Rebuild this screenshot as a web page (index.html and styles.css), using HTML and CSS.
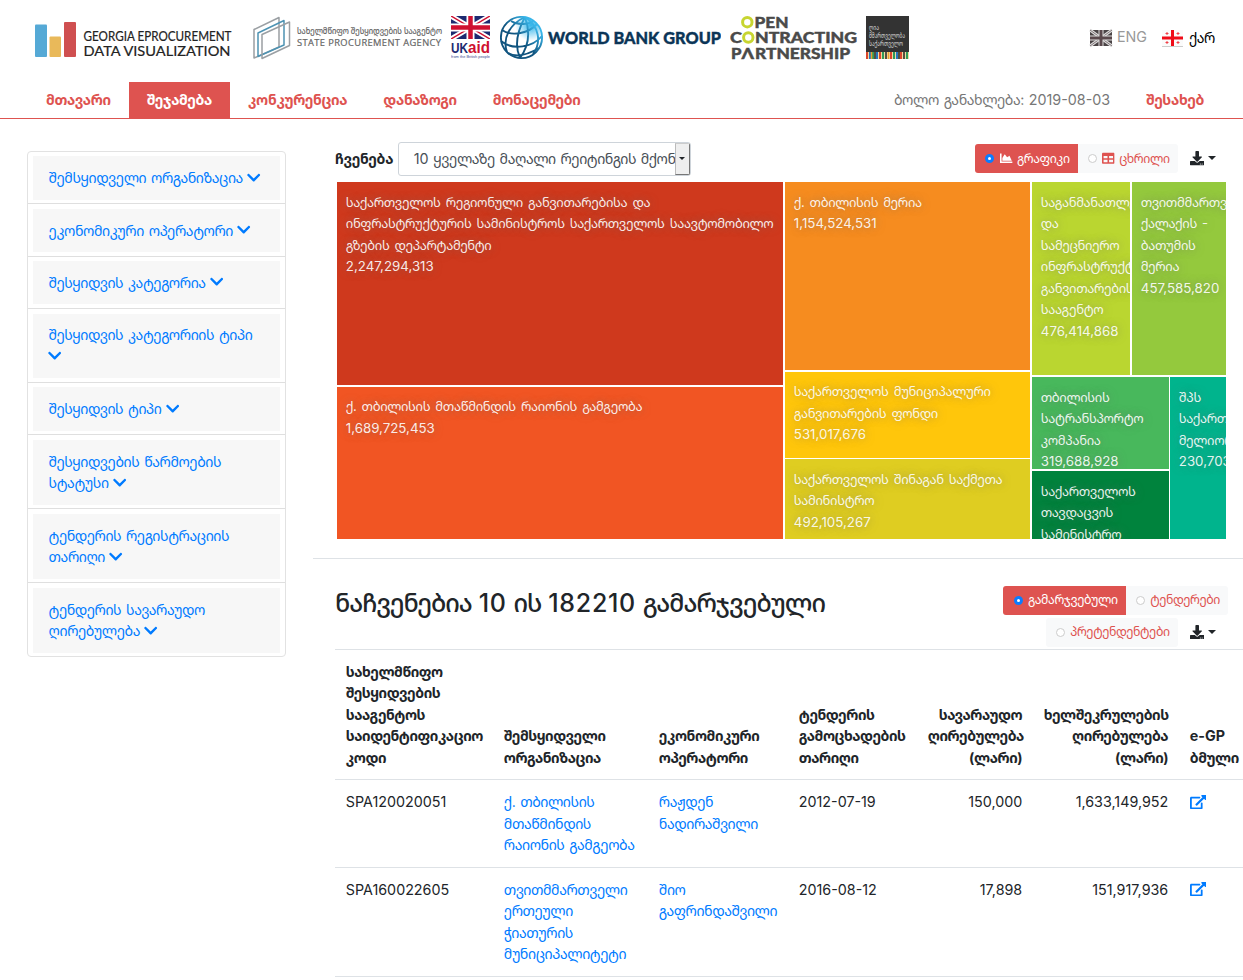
FILE: index.html
```html
<!DOCTYPE html>
<html lang="ka">
<head>
<meta charset="utf-8">
<title>Georgia eProcurement Data Visualization</title>
<link rel="stylesheet" href="styles.css">
</head>
<body>
<svg class="defs" width="0" height="0">
  <symbol id="chev" viewBox="0 0 448 512"><path d="M207.029 381.476L12.686 187.132c-9.373-9.373-9.373-24.569 0-33.941l22.667-22.667c9.357-9.357 24.522-9.375 33.901-.04L224 284.505l154.745-154.021c9.379-9.335 24.544-9.317 33.901.04l22.667 22.667c9.373 9.373 9.373 24.569 0 33.941L240.971 381.476c-9.373 9.372-24.569 9.372-33.942 0z"/></symbol>
  <symbol id="area" viewBox="0 0 512 512"><path d="M500 384c6.6 0 12 5.4 12 12v40c0 6.6-5.4 12-12 12H12c-6.6 0-12-5.4-12-12V76c0-6.6 5.4-12 12-12h40c6.6 0 12 5.4 12 12v308h436zM372.7 159.5L288 216l-85.3-113.7c-5.1-6.8-15.5-6.3-19.9 1L96 248v104h384l-89.9-187.8c-3.2-6.5-11.4-8.7-17.4-4.7z"/></symbol>
  <symbol id="grid" viewBox="0 0 512 512"><path d="M464 32H48C21.49 32 0 53.49 0 80v352c0 26.51 21.49 48 48 48h416c26.51 0 48-21.49 48-48V80c0-26.51-21.49-48-48-48zM224 416H64v-96h160v96zm0-160H64v-96h160v96zm224 160H288v-96h160v96zm0-160H288v-96h160v96z"/></symbol>
  <symbol id="down" viewBox="0 0 512 512"><path d="M216 0h80c13.3 0 24 10.7 24 24v168h87.7c17.8 0 26.7 21.5 14.1 34.1L269.7 378.3c-7.5 7.5-19.8 7.5-27.3 0L90.1 226.1c-12.6-12.6-3.7-34.1 14.1-34.1H192V24c0-13.3 10.7-24 24-24zm296 376v112c0 13.3-10.7 24-24 24H24c-13.3 0-24-10.7-24-24V376c0-13.3 10.7-24 24-24h146.7l49 49c20.1 20.1 52.5 20.1 72.6 0l49-49H488c13.3 0 24 10.7 24 24zm-124 88c0-11-9-20-20-20s-20 9-20 20 9 20 20 20 20-9 20-20zm64 0c0-11-9-20-20-20s-20 9-20 20 9 20 20 20 20-9 20-20z"/></symbol>
  <symbol id="ext" viewBox="0 0 576 512"><path d="M576 24v127.984c0 21.461-25.96 31.98-40.971 16.971l-35.707-35.709-243.523 243.523c-9.373 9.373-24.568 9.373-33.941 0l-22.627-22.627c-9.373-9.373-9.373-24.569 0-33.941L442.756 76.676l-35.703-35.705C391.982 25.9 402.656 0 424.024 0H552c13.255 0 24 10.745 24 24zM407.029 270.794l-16 16A23.999 23.999 0 0 0 384 303.765V448H64V128h264a24.003 24.003 0 0 0 16.97-7.029l16-16C376.089 89.851 365.381 64 344 64H48C21.49 64 0 85.49 0 112v352c0 26.51 21.49 48 48 48h352c26.51 0 48-21.49 48-48V287.764c0-21.382-25.852-32.09-40.971-16.97z"/></symbol>
</svg>

<header class="top">
  <svg class="logo logo-ge" width="198" height="43" viewBox="0 0 198 43">
    <rect x="0" y="8.500" width="12" height="32.500" rx="1" fill="#55a9d6"/>
    <rect x="14.500" y="20.500" width="11.500" height="20.500" rx="1" fill="#e9b95a"/>
    <rect x="29" y="6" width="12" height="35" rx="1" fill="#cf4f50"/>
    <text x="48.500" y="24.600" font-size="13" textLength="148" lengthAdjust="spacingAndGlyphs" class="lato">GEORGIA EPROCUREMENT</text>
    <text x="48.500" y="40.400" font-size="14.300" textLength="147" lengthAdjust="spacingAndGlyphs" class="lato">DATA VISUALIZATION</text>
  </svg>
  <svg class="logo logo-spa" width="190" height="45" viewBox="0 0 190 45">
    <g fill="none" stroke-width="1.500" stroke-linejoin="round">
      <path d="M1 13.500L26 1.500V31L1 42z" stroke="#9a9fa3"/>
      <path d="M5 17L31 4.500V29L5 40.500z" stroke="#4d93b3"/>
      <path d="M9 18.500L36.500 6V29.500L9 42.500z" stroke="#9a9fa3"/>
    </g>
    <text x="44" y="18.300" font-size="8.500" textLength="145" lengthAdjust="spacingAndGlyphs" class="spa">სახელმწიფო შესყიდვების სააგენტო</text>
    <text x="44" y="29.600" font-size="9.300" textLength="144" lengthAdjust="spacing" class="spa">STATE PROCUREMENT AGENCY</text>
  </svg>
  <svg class="logo logo-uk" width="39" height="44" viewBox="0 0 39 44">
    <svg width="39" height="23" viewBox="0 0 39 23">
      <rect width="39" height="23" fill="#1d2a70"/>
      <path d="M0 0L39 23M39 0L0 23" stroke="#fff" stroke-width="5"/>
      <path d="M0 0L39 23M39 0L0 23" stroke="#cf1030" stroke-width="1.500"/>
      <path d="M19.500 0V23M0 11.500H39" stroke="#fff" stroke-width="8"/>
      <path d="M19.500 0V23M0 11.500H39" stroke="#cf1030" stroke-width="4.500"/>
    </svg>
    <text x="0" y="36.800" font-size="15" class="ukaid" fill="#1d2a70" textLength="17" lengthAdjust="spacingAndGlyphs">UK</text>
    <text x="17" y="36.800" font-size="16" class="ukaid" fill="#cf1030" textLength="22" lengthAdjust="spacingAndGlyphs">aid</text>
    <text x="0" y="42" font-size="4" class="tag" fill="#3d4a90" textLength="39" lengthAdjust="spacingAndGlyphs">from the British people</text>
  </svg>
  <svg class="logo logo-wb" width="221" height="44" viewBox="0 0 221 44">
    <defs><linearGradient id="globe" x1="0" y1="1" x2="1" y2="0"><stop offset="0.450" stop-color="#10547f"/><stop offset="0.800" stop-color="#38b5e9"/></linearGradient><radialGradient id="glow" cx="31" cy="9" r="16" gradientUnits="userSpaceOnUse"><stop offset="0" stop-color="#30b4ea"/><stop offset="1" stop-color="#fff"/></radialGradient></defs>
    <circle cx="21.500" cy="21.500" r="20.500" fill="url(#glow)"/>
    <g fill="none" stroke="url(#globe)" stroke-width="1.900">
      <circle cx="21.500" cy="21.500" r="20.600"/>
      <path d="M25 1C10 8 2 22 7 36M25 1C18 14 14 29 20 42M25 1C30 15 29 30 20 42M25 1C39 10 42 26 33 38M2 14C12 21 29 17 37 8M1 25C13 35 33 31 42 20M8 37C17 42 29 38 39 32M11 5C19 10 29 8 33 5"/>
    </g>
    <text x="48" y="28" font-size="17.800" class="wb" textLength="173" lengthAdjust="spacingAndGlyphs">WORLD BANK GROUP</text>
  </svg>
  <svg class="logo logo-ocp" width="128" height="44" viewBox="0 0 128 44">
    <g class="ocp">
      <text x="24.500" y="11.800" font-size="15.500" textLength="34" lengthAdjust="spacingAndGlyphs">PEN</text>
      <text x="0" y="27" font-size="15.500" textLength="12" lengthAdjust="spacingAndGlyphs">C</text>
      <text x="25" y="27" font-size="15.500" textLength="102" lengthAdjust="spacingAndGlyphs">NTRACTING</text>
      <text x="1" y="42.800" font-size="15.500" textLength="10.500" lengthAdjust="spacingAndGlyphs">P</text>
      <text x="11.500" y="42.800" font-size="15.500" textLength="12.500" lengthAdjust="spacingAndGlyphs">Λ</text>
      <text x="25" y="42.800" font-size="15.500" textLength="95" lengthAdjust="spacingAndGlyphs">RTNERSHIP</text>
    </g>
    <circle cx="17.300" cy="6.200" r="4.700" fill="none" stroke="#c7d530" stroke-width="3"/>
    <circle cx="18.300" cy="21.500" r="4.700" fill="none" stroke="#c7d530" stroke-width="3"/>
  </svg>
  <svg class="logo logo-og" width="43" height="43" viewBox="0 0 43 43">
    <rect width="43" height="36" fill="#333"/>
    <g font-size="6.500" class="og"><text x="3" y="13.500" textLength="10" lengthAdjust="spacingAndGlyphs">ღია</text><text x="3" y="21.500" textLength="36" lengthAdjust="spacingAndGlyphs">მმართველობა</text><text x="3" y="29.500" textLength="34" lengthAdjust="spacingAndGlyphs">საქართველო</text></g>
    <rect y="36" width="43" height="7" fill="#f0d9a0"/>
    <path stroke-width="2" stroke="#d9452c" d="M1 36v7M14 36v7M25 36v7M35 36v7"/>
    <path stroke-width="2" stroke="#2676c0" d="M4 36v7M11 36v7M31 36v7"/>
    <path stroke-width="2" stroke="#2f9b58" d="M7 36v7M17 36v7M28 36v7M41 36v7"/>
    <path stroke-width="1.500" stroke="#222" d="M9 36v7M20 36v7M33 36v7M38 36v7"/>
    <path stroke-width="1.500" stroke="#eda12d" d="M22.500 36v7M5.500 36v7"/>
  </svg>
  <div class="langs">
    <svg width="24" height="20" viewBox="0 0 24 20"><rect x="1" y="2" width="22" height="16" fill="#4a4345"/><path d="M1 2L23 18M23 2L1 18" stroke="#ddd" stroke-width="2.800"/><path d="M1 2L23 18M23 2L1 18" stroke="#6b5c60" stroke-width=".8"/><path d="M12 2V18M1 10H23" stroke="#ddd" stroke-width="5"/><path d="M12 2V18M1 10H23" stroke="#5a484c" stroke-width="3"/></svg>
    <span class="eng n">ENG</span>
    <svg width="24" height="20" viewBox="0 0 24 20"><rect x="1" y="2" width="21" height="16" fill="#fbfbfb"/><path d="M1 18.500H22" stroke="#ccc"/><path d="M11.500 2V18M1 10H22" stroke="#f00c18" stroke-width="3"/><path d="M6 4v3M4.500 5.500h3M17 4v3M15.500 5.500h3M6 13v3M4.500 14.500h3M17 13v3M15.500 14.500h3" stroke="#f04048" stroke-width="1"/></svg>
    <span class="kar">ქარ</span>
  </div>
</header>

<nav class="nav">
  <a>მთავარი</a><a class="active">შეჯამება</a><a>კონკურენცია</a><a>დანაზოგი</a><a>მონაცემები</a>
  <span class="updated">ბოლო განახლება: <span class="n">2019-08-03</span></span><a>შესახებ</a>
</nav>

<div class="page">
  <aside class="filters">
    <div class="card"><div class="head">შემსყიდველი ორგანიზაცია <svg class="chev"><use href="#chev"/></svg></div></div>
    <div class="card"><div class="head">ეკონომიკური ოპერატორი <svg class="chev"><use href="#chev"/></svg></div></div>
    <div class="card"><div class="head">შესყიდვის კატეგორია <svg class="chev"><use href="#chev"/></svg></div></div>
    <div class="card"><div class="head">შესყიდვის კატეგორიის ტიპი<br><svg class="chev"><use href="#chev"/></svg></div></div>
    <div class="card"><div class="head">შესყიდვის ტიპი <svg class="chev"><use href="#chev"/></svg></div></div>
    <div class="card"><div class="head">შესყიდვების წარმოების<br>სტატუსი <svg class="chev"><use href="#chev"/></svg></div></div>
    <div class="card"><div class="head">ტენდერის რეგისტრაციის<br>თარიღი <svg class="chev"><use href="#chev"/></svg></div></div>
    <div class="card"><div class="head">ტენდერის სავარაუდო<br>ღირებულება <svg class="chev"><use href="#chev"/></svg></div></div>
  </aside>

  <main class="main">
    <div class="bar">
      <b class="show">ჩვენება</b>
      <div class="select"><span><span class="n">10</span> ყველაზე მაღალი რეიტინგის მქონე</span><i class="arrow"></i></div>
      <div class="tools">
        <div class="btn on"><i class="radio"></i><svg class="ic"><use href="#area"/></svg>გრაფიკი</div>
        <div class="btn end"><i class="radio"></i><svg class="ic"><use href="#grid"/></svg>ცხრილი</div>
        <div class="dl"><svg><use href="#down"/></svg><i class="caret"></i></div>
      </div>
    </div>

    <div class="treemap">
      <div class="col c1">
        <div class="tile t1">საქართველოს რეგიონული განვითარებისა და<br>ინფრასტრუქტურის სამინისტროს საქართველოს საავტომობილო<br>გზების დეპარტამენტი<br><span class="n">2,247,294,313</span></div>
        <div class="tile t2">ქ. თბილისის მთაწმინდის რაიონის გამგეობა<br><span class="n">1,689,725,453</span></div>
      </div>
      <div class="col c2">
        <div class="tile t3">ქ. თბილისის მერია<br><span class="n">1,154,524,531</span></div>
        <div class="tile t4">საქართველოს მუნიციპალური<br>განვითარების ფონდი<br><span class="n">531,017,676</span></div>
        <div class="tile t5">საქართველოს შინაგან საქმეთა<br>სამინისტრო<br><span class="n">492,105,267</span></div>
      </div>
      <div class="col c3">
        <div class="row r1">
          <div class="tile t6">საგანმანათლებლო<br>და<br>სამეცნიერო<br>ინფრასტრუქტურის<br>განვითარების<br>სააგენტო<br><span class="n">476,414,868</span></div>
          <div class="tile t7">თვითმმართველი<br>ქალაქის -<br>ბათუმის<br>მერია<br><span class="n">457,585,820</span></div>
        </div>
        <div class="row r2">
          <div class="col c4">
            <div class="tile t8">თბილისის<br>სატრანსპორტო<br>კომპანია<br><span class="n">319,688,928</span></div>
            <div class="tile t9">საქართველოს<br>თავდაცვის<br>სამინისტრო</div>
          </div>
          <div class="tile t10">შპს<br>საქართველოს<br>მელიორაცია<br><span class="n">230,703,118</span></div>
        </div>
      </div>
    </div>

    <section class="results">
      <div class="rhead">
        <h2>ნაჩვენებია <span>10</span> ის <span>182210</span> გამარჯვებული</h2>
        <div class="rtools">
          <div class="line"><div class="btn on"><i class="radio"></i>გამარჯვებული</div><div class="btn end"><i class="radio"></i>ტენდერები</div></div>
          <div class="line l2"><div class="btn end"><i class="radio"></i>პრეტენდენტები</div><div class="dl"><svg><use href="#down"/></svg><i class="caret"></i></div></div>
        </div>
      </div>
      <table>
        <colgroup><col class="w1"><col class="w2"><col class="w3"><col class="w4"><col class="w5"><col class="w6"><col class="w7"></colgroup>
        <thead><tr><th>სახელმწიფო<br>შესყიდვების<br>სააგენტოს<br>საიდენტიფიკაციო<br>კოდი</th><th>შემსყიდველი<br>ორგანიზაცია</th><th>ეკონომიკური<br>ოპერატორი</th><th>ტენდერის<br>გამოცხადების<br>თარიღი</th><th class="num">სავარაუდო<br>ღირებულება<br>(ლარი)</th><th class="num">ხელშეკრულების<br>ღირებულება<br>(ლარი)</th><th><span class="n">e-GP</span><br>ბმული</th></tr></thead>
        <tbody>
          <tr><td><span class="n">SPA120020051</span></td><td><a>ქ. თბილისის<br>მთაწმინდის<br>რაიონის გამგეობა</a></td><td><a>რაჟდენ<br>ნადირაშვილი</a></td><td><span class="n">2012-07-19</span></td><td class="num"><span class="n">150,000</span></td><td class="num"><span class="n">1,633,149,952</span></td><td><svg class="ext"><use href="#ext"/></svg></td></tr>
          <tr><td><span class="n">SPA160022605</span></td><td><a>თვითმმართველი<br>ერთეული<br>ჭიათურის<br>მუნიციპალიტეტი</a></td><td><a>შიო<br>გაფრინდაშვილი</a></td><td><span class="n">2016-08-12</span></td><td class="num"><span class="n">17,898</span></td><td class="num"><span class="n">151,917,936</span></td><td><svg class="ext"><use href="#ext"/></svg></td></tr>
          <tr><td></td><td></td><td></td><td></td><td></td><td></td><td></td></tr>
        </tbody>
      </table>
    </section>
  </main>
</div>
</body>
</html>
```
FILE: styles.css
```css
* { box-sizing: border-box; }
html { font-size: 14.4px; }
body { margin: 0; height: 980px; overflow: hidden; background: #fff; color: #212529; font-family: Inter, "Noto Sans Georgian", sans-serif; font-size: 14.1px; line-height: 21.6px; letter-spacing: -.42px; word-spacing: 1.3px; }
svg { flex: none; fill: currentColor; letter-spacing: 0; word-spacing: 0; }
.n { font-size: 14.3px; letter-spacing: 0; line-height: 1; }
.defs { position: absolute; }

.top { display: flex; align-items: flex-start; height: 82px; padding: 16px 28px 0 35px; }
.logo { display: block; }
.logo-ge { margin-right: 20px; }
.logo-spa { margin-right: 8px; }
.logo-uk { margin-right: 10px; }
.logo-wb { margin-right: 9px; }
.logo-ocp { margin-right: 8px; }
.lato { font-family: Lato, sans-serif; fill: #222; stroke: #222; stroke-width: .2px; }
.spa { font-family: "Open Sans", "Noto Sans Georgian", sans-serif; fill: #666; stroke: #666; stroke-width: .2px; }
.ukaid { font-family: "Liberation Sans", sans-serif; font-weight: bold; }
.tag { font-family: "Liberation Sans", sans-serif; }
.wb { font-family: Lato, sans-serif; font-weight: 900; fill: #0b3557; stroke: #0b3557; stroke-width: .4px; }
.ocp { font-family: Lato, sans-serif; font-weight: 900; fill: #4a4a49; stroke: #4a4a49; stroke-width: .4px; }
.og { fill: #ddd; font-family: "Noto Sans Georgian", sans-serif; }
.langs { display: flex; align-items: center; margin-left: auto; height: 43px; }
.eng { color: #999; margin: 0 14px 0 4px; }
.kar { color: #000; margin-left: 4px; }

.nav { display: flex; height: 37px; padding: 0 21px 0 28px; border-bottom: 1px solid #de5350; line-height: 36px; }
.nav a { padding: 0 18px; color: #de5350; font-weight: bold; letter-spacing: -.28px; }
.nav .active { background: #de5350; color: #fff; }
.updated { margin-left: auto; padding: 0 18px; color: #777; }

.page { display: flex; align-items: flex-start; }
.filters { width: 258.5px; margin: 32px 27px 0; border: 1px solid #e2e2e2; border-radius: 4px; }
.card { padding: 4.4px 4.6px 3.8px 5px; border-bottom: 1px solid #dfdfdf; }
.card:last-child { border-bottom: 0; }
.head { padding: 10.8px 15.6px; background: #f7f7f7; color: #007bff; white-space: nowrap; }
.chev { width: 13.4px; height: 15.3px; margin-left: -.5px; vertical-align: -1.8px; }

.main { flex: none; width: 930.5px; }
.bar { display: flex; align-items: center; height: 63px; padding: 23px 0 7px 22.5px; }
.show { margin-right: 5px; letter-spacing: -.25px; }
.select { display: flex; width: 292.5px; height: 34px; border: 1px solid #ced4da; border-radius: 3px; color: #495057; line-height: 32px; letter-spacing: -.44px; white-space: nowrap; overflow: hidden; }
.select > span { flex: 1; min-width: 0; padding-left: 14.5px; overflow: hidden; }
.arrow { display: flex; align-items: center; justify-content: center; width: 15px; background: #efefef; border: 1px solid #777; border-left-color: #bbb; border-top-color: #ccc; }
.arrow::after, .caret { content: ""; border: 4px solid transparent; border-top-color: #212529; border-bottom: 0; }
.arrow::after { border-width: 3px; border-bottom: 0; }
.tools { display: flex; align-items: center; margin-left: auto; margin-right: 27px; }
.btn { display: flex; align-items: center; height: 28.5px; padding: 0 8px 0 10px; border-radius: 0 3px 3px 0; background: #f8f9fa; color: #de5350; font-size: 12.3px; letter-spacing: -.4px; }
.btn.on { padding-left: 10.5px; background: #de5350; color: #fff; border-radius: 3px 0 0 3px; }
.radio { width: 9px; height: 9px; margin-right: 5.5px; border-radius: 50%; background: #fff; border: 1px solid #ccc; }
.on .radio { border: 3px solid #0a7cff; }
.ic { width: 12.6px; height: 12.6px; margin-right: 4.5px; }
.dl { display: flex; align-items: center; margin-left: 12px; }
.dl svg { width: 14.4px; height: 14.4px; margin-right: 4px; }

.treemap { display: flex; gap: 2px; width: 889px; height: 357px; margin-left: 24.5px; overflow: hidden; }
.col { display: flex; flex-direction: column; gap: 2px; }
.row { display: flex; gap: 2px; }
.c1 { width: 446px; }
.c2 { width: 245px; gap: 0; }
.c3 { width: 194px; }
.tile { flex: none; padding: 9.5px 0 0 8.8px; overflow: hidden; color: rgba(255,255,255,.9); font-size: 13px; line-height: 21.55px; letter-spacing: -.38px; word-spacing: 1.9px; white-space: nowrap; text-shadow: 0 0 8px rgba(110,110,110,.6); }
.tile .n { font-size: 13.3px; }
.t1 { height: 203px; background: #cf391d; }
.t2 { height: 152px; padding-top: 9px; background: #f15523; }
.t3 { height: 188px; margin-bottom: 2px; background: #f68c1f; }
.t4 { height: 86px; padding-top: 9px; margin-bottom: 1px; background: #ffc60b; }
.t5 { height: 80px; background: #dfcd21; }
.r1 { height: 193px; }
.r2 { height: 162px; gap: 1px; }
.t6 { width: 98px; background: #bad630; }
.t7 { width: 94px; background: #94c93d; }
.c4 { width: 137px; }
.t8 { height: 92px; background: #48b85c; }
.t9 { height: 68px; background: #00833d; }
.t10 { width: 56px; background: #00b48d; }

.results { margin-top: 19px; border-top: 1px solid #dee2e6; }
.rhead { display: flex; justify-content: space-between; height: 89.8px; padding: 27px 15px 0 22.5px; }
h2 { margin: 3.5px 0 0; font-size: 25px; line-height: 26px; font-weight: 500; letter-spacing: -1.05px; word-spacing: 1.3px; white-space: nowrap; }
h2 span { letter-spacing: .7px; }
.line { display: flex; align-items: center; justify-content: flex-end; margin-bottom: 3.5px; }
.l2 { padding-right: 12px; }
.l2 .btn { border-radius: 3px; }
table { width: 930px; margin-left: 22.5px; border-collapse: collapse; table-layout: fixed; }
.w1 { width: 158px; }
.w2 { width: 155px; }
.w3 { width: 140px; }
.w4 { width: 129px; }
.w5 { width: 116px; }
.w6 { width: 146px; }
.w7 { width: 86px; }
th, td { padding: 10.8px; border-top: 1px solid #dee2e6; text-align: left; vertical-align: top; white-space: nowrap; }
th { vertical-align: bottom; font-weight: bold; }
td a, .ext { color: #007bff; }
th.num, td.num { text-align: right; }
.ext { width: 16.2px; height: 14.4px; vertical-align: -1.8px; }
```
